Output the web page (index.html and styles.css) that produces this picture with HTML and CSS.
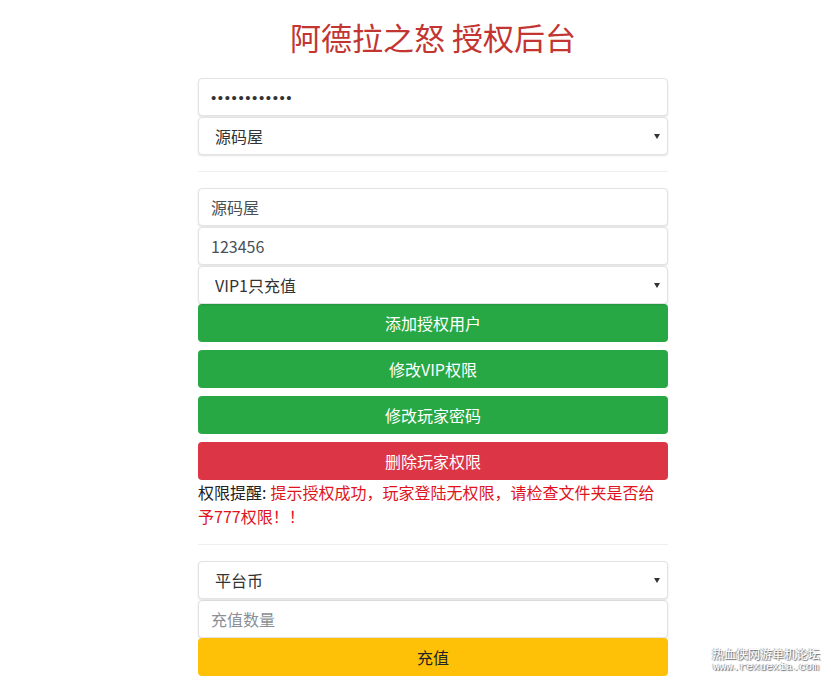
FILE: index.html
```html
<!DOCTYPE html>
<html lang="zh">
<head>
  <meta charset="UTF-8">
  <meta name="viewport" content="width=device-width, initial-scale=1.0">
  <title>阿德拉之怒 授权后台</title>
  <link rel="stylesheet" href="styles.css">
</head>
<body>
  <div class="panel">
    <h1>阿德拉之怒 授权后台</h1>

    <input class="field secret" type="password" value="123456789012">
    <div class="select-wrap">
      <select class="field picker">
        <option>源码屋</option>
      </select>
    </div>

    <hr>

    <input class="field" type="text" value="源码屋">
    <input class="field" type="text" value="123456">
    <div class="select-wrap flush">
      <select class="field picker">
        <option>VIP1只充值</option>
      </select>
    </div>
    <button class="btn btn-green">添加授权用户</button>
    <button class="btn btn-green">修改VIP权限</button>
    <button class="btn btn-green">修改玩家密码</button>
    <button class="btn btn-red">删除玩家权限</button>
    <p class="notice"><span class="label">权限提醒:</span><span class="warn">提示授权成功，玩家登陆无权限，请检查文件夹是否给予777权限！！</span></p>

    <hr>

    <div class="select-wrap">
      <select class="field picker">
        <option>平台币</option>
      </select>
    </div>
    <input class="field flush" type="text" placeholder="充值数量">
    <button class="btn btn-yellow">充值</button>
  </div>

  <div class="watermark">
    <div class="wm-name">热血侠网游单机论坛</div>
    <div class="wm-url">www.rexuexia.com</div>
  </div>
</body>
</html>
```

FILE: styles.css
```css
html, body {
  margin: 0;
  overflow: hidden;
  background: #fff;
}
body {
  font-family: "Noto Sans CJK SC", "Noto Sans", sans-serif;
  color: #212529;
  font-size: 16px;
}
.panel {
  width: 470px;
  margin-left: 198px;
}
h1 {
  margin: 18px 0 22px;
  font-size: 31px;
  line-height: 38px;
  font-weight: 400;
  text-align: center;
  color: #c23531;
}
.field {
  display: block;
  width: 100%;
  height: 38px;
  box-sizing: border-box;
  margin: 0 0 1px;
  padding: 0 12px;
  font-family: inherit;
  font-size: 16px;
  color: #495057;
  background: #fff;
  border: 1px solid #e3e3e3;
  border-radius: 4px;
  box-shadow: 0 1px 2px rgba(0,0,0,0.12);
  outline: none;
}
.field.secret {
  font-family: "Liberation Sans", sans-serif;
  font-size: 15px;
  letter-spacing: 1.6px;
  color: #333;
}
.field::placeholder {
  color: #8a9096;
}
.field.flush {
  margin-bottom: 0;
}
.select-wrap {
  position: relative;
  margin-bottom: 1px;
}
.select-wrap.flush {
  margin-bottom: 0;
}
.select-wrap::after {
  content: "";
  position: absolute;
  right: 8px;
  top: 17px;
  border-left: 3px solid transparent;
  border-right: 3px solid transparent;
  border-top: 5px solid #333;
}
.picker {
  appearance: none;
  -webkit-appearance: none;
  padding-left: 16px;
  color: #333;
  margin-bottom: 0;
}
hr {
  margin: 16px 0;
  border: 0;
  border-top: 1px solid #eceeef;
}
.btn {
  display: block;
  width: 100%;
  height: 38px;
  margin: 0 0 8px;
  border: none;
  border-radius: 4px;
  font-family: inherit;
  font-size: 16px;
  color: #fff;
  cursor: pointer;
}
.btn-green {
  background: #28a745;
}
.btn-red {
  background: #dc3545;
  margin-bottom: 0;
}
.btn-yellow {
  background: #ffc107;
  color: #212529;
  margin: 0;
}
.notice {
  margin: 0;
  line-height: 24px;
  color: #222;
}
.notice .label {
  margin-right: 4px;
}
.warn {
  color: #e0141e;
}
.watermark {
  position: absolute;
  right: 11px;
  bottom: 7px;
  text-align: center;
  color: #fff;
  text-shadow: 1px 1px 1px #666, -1px 0 1px #999;
}
.wm-name {
  font-size: 12px;
  line-height: 15px;
}
.wm-url {
  font-family: "Liberation Mono", monospace;
  font-size: 11px;
  line-height: 13px;
}
```
